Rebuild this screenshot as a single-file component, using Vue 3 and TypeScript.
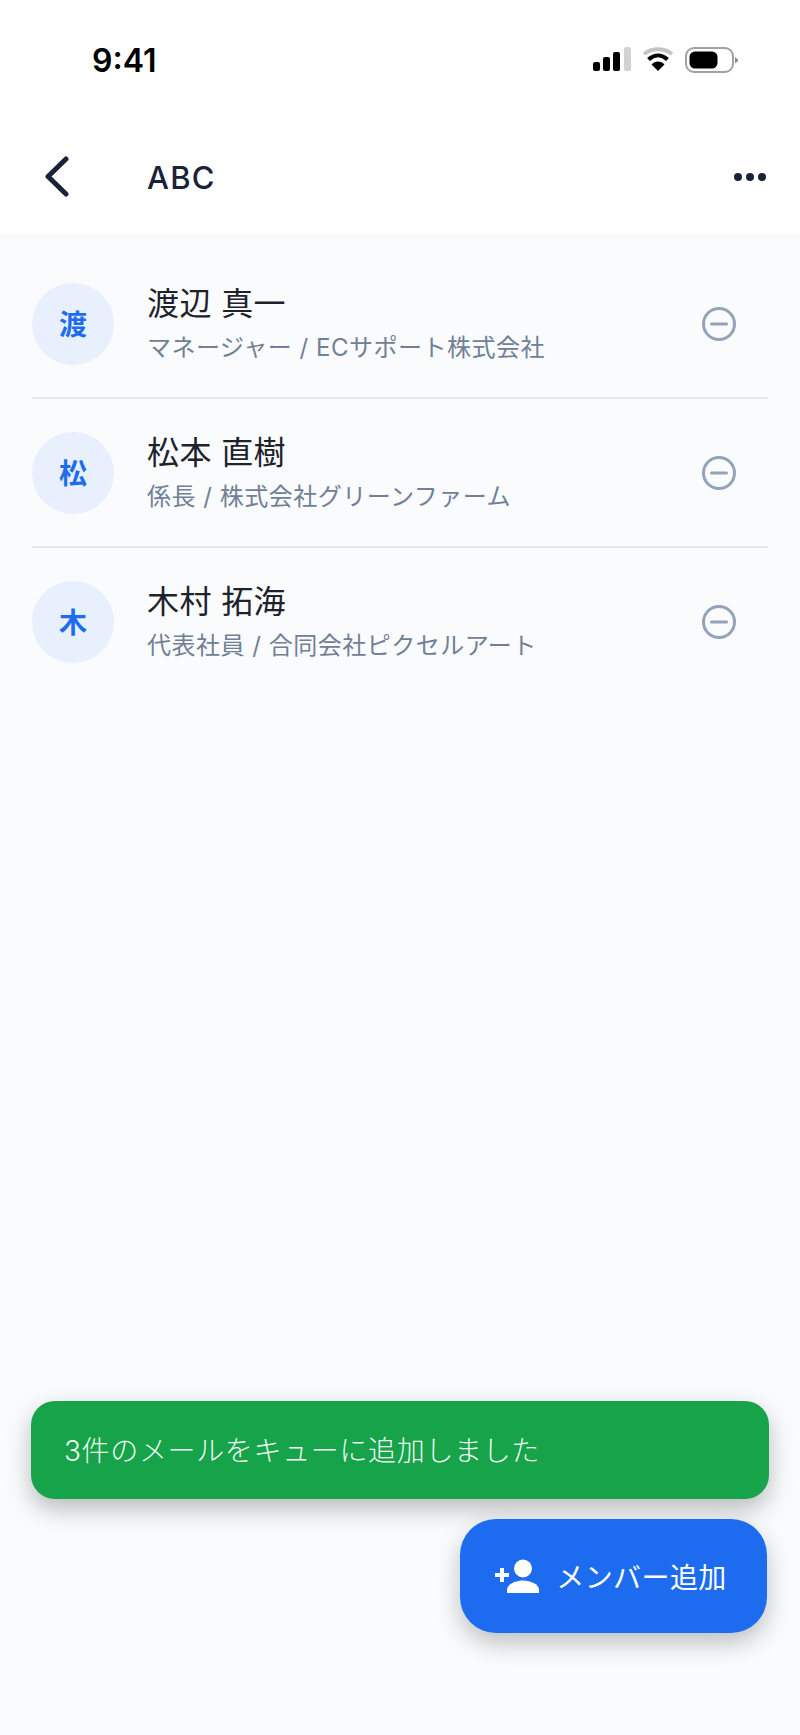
<script setup lang="ts">
interface Member { initial: string; name: string; role: string }
const members: Member[] = [
  { initial: '渡', name: '渡辺 真一', role: 'マネージャー / ECサポート株式会社' },
  { initial: '松', name: '松本 直樹', role: '係長 / 株式会社グリーンファーム' },
  { initial: '木', name: '木村 拓海', role: '代表社員 / 合同会社ピクセルアート' },
]
</script>

<template>
  <div class="page">
    <header class="top">
      <div class="status">
        <span class="time">9:41</span>
        <div class="status-icons">
          <svg width="38" height="26" viewBox="0 0 38 26">
            <rect x="0" y="15" width="7" height="9" rx="2" fill="#000" />
            <rect x="10" y="10" width="7" height="14" rx="2" fill="#000" />
            <rect x="20" y="5" width="7" height="19" rx="2" fill="#000" />
            <rect x="31" y="0" width="7" height="24" rx="2" fill="#d2d2d2" />
          </svg>
          <svg width="32" height="26" viewBox="0 0 32 26">
            <path d="M2 7C10 0.500 22 0.500 30 7" fill="none" stroke="#c4c4c4" stroke-width="4" />
            <path d="M6.500 12.500C12.500 7 19.500 7 25.500 12.500" fill="none" stroke="#000" stroke-width="4" />
            <path d="M16 24L9.500 17.500C13 13.500 19 13.500 22.500 17.500Z" fill="#000" />
          </svg>
          <svg width="54" height="26" viewBox="0 0 54 26">
            <rect x="1" y="1" width="47" height="24" rx="8" fill="none" stroke="#a2a2a2" stroke-width="2" />
            <rect x="4.500" y="4.500" width="28" height="17" rx="5.500" fill="#000" />
            <path d="M50 10L53 12.500V14L50 16.500Z" fill="#8a8a8a" />
          </svg>
        </div>
      </div>
      <div class="nav">
        <svg class="back" width="28" height="42" viewBox="0 0 28 42">
          <path d="M23 4L5 21.500L23 39" fill="none" stroke="#1a2238" stroke-width="5" stroke-linecap="round" stroke-linejoin="round" />
        </svg>
        <h1 class="title">ABC</h1>
        <svg class="more" width="34" height="10" viewBox="0 0 34 10">
          <circle cx="5" cy="5" r="4" fill="#1a2238" />
          <circle cx="17" cy="5" r="4" fill="#1a2238" />
          <circle cx="29" cy="5" r="4" fill="#1a2238" />
        </svg>
      </div>
    </header>

    <main class="list">
      <div v-for="m in members" :key="m.name" class="row">
        <div class="avatar">{{ m.initial }}</div>
        <div class="info">
          <div class="name">{{ m.name }}</div>
          <div class="role">{{ m.role }}</div>
        </div>
        <svg class="remove" width="36" height="36" viewBox="0 0 36 36">
          <circle cx="18" cy="18" r="15.500" fill="none" stroke="#94a3b8" stroke-width="3" />
          <path d="M10.500 18H25.500" fill="none" stroke="#94a3b8" stroke-width="3" stroke-linecap="round" />
        </svg>
      </div>
    </main>

    <footer class="bottom">
      <div class="toast">3件のメールをキューに追加しました</div>
      <button class="fab" type="button">
        <svg width="46" height="34" viewBox="0 0 46 34">
          <path d="M6 14H10V9H6ZM6 14H1V18H6V23H10V18H15V14H10" fill="#fff" />
          <circle cx="29" cy="9.500" r="9" fill="#fff" />
          <path d="M13 34V31C13 25 22 21.500 29 21.500S45 25 45 31V34Z" fill="#fff" />
        </svg>
        <span>メンバー追加</span>
      </button>
    </footer>
  </div>
</template>

<style scoped>
.page {
  width: 800px;
  height: 1735px;
  display: flex;
  flex-direction: column;
  background: #f9fbfd;
  font-family: Inter, "Noto Sans CJK JP", sans-serif;
  overflow: hidden;
}
.top {
  background: #fff;
  height: 234px;
  flex: none;
}
.status {
  height: 118px;
  display: flex;
  align-items: flex-start;
  justify-content: space-between;
  padding: 39px 61px 0 92px;
  box-sizing: border-box;
}
.time {
  font-size: 32px;
  line-height: 44px;
  font-weight: 600;
  color: #000;
}
.status-icons {
  display: flex;
  align-items: center;
  gap: 11px;
  margin-top: 8px;
}
.nav {
  height: 116px;
  display: flex;
  align-items: center;
  padding: 0 33px 0 43px;
}
.back {
  flex: none;
  margin-right: 76px;
}
.title {
  flex: 1;
  margin: 4px 0 0;
  font-size: 31px;
  line-height: 40px;
  font-weight: 500;
  color: #1a2238;
  letter-spacing: 1.2px;
}
.more {
  margin-top: 2px;
}
.list {
  padding: 16px 32px 0;
}
.row {
  height: 149px;
  box-sizing: border-box;
  display: flex;
  align-items: center;
  border-bottom: 2px solid #e3e8ec;
}
.row:last-child {
  border-bottom-color: transparent;
}
.avatar {
  width: 82px;
  height: 82px;
  flex: none;
  margin-right: 33px;
  border-radius: 50%;
  background: #e8f0fe;
  color: #1d6cf0;
  font-size: 28px;
  font-weight: 600;
  display: flex;
  align-items: center;
  justify-content: center;
  padding-bottom: 2px;
  box-sizing: border-box;
}
.info {
  flex: 1;
  min-width: 0;
}
.name {
  font-size: 32px;
  line-height: 40px;
  margin-top: 1px;
  letter-spacing: 0.4px;
  color: #1e222b;
}
.role {
  margin-top: 7px;
  font-size: 24px;
  line-height: 34px;
  letter-spacing: 0.5px;
  color: #718096;
}
.remove {
  flex: none;
  margin-right: 31px;
}
.bottom {
  margin-top: auto;
  padding: 0 31px 102px 31px;
  display: flex;
  flex-direction: column;
  align-items: flex-end;
}
.toast {
  align-self: stretch;
  height: 98px;
  box-sizing: border-box;
  padding: 0 33px 2px;
  display: flex;
  align-items: center;
  border-radius: 24px;
  background: #16a34a;
  color: rgba(255, 255, 255, 0.96);
  font-size: 28px;
  font-weight: 300;
  letter-spacing: 0.65px;
  box-shadow: 0 10px 24px rgba(0, 0, 0, 0.26);
}
.fab {
  margin-top: 20px;
  margin-right: 2px;
  width: 307px;
  height: 114px;
  border: 0;
  border-radius: 36px;
  background: #1d6cf0;
  color: #fff;
  font-family: inherit;
  font-size: 28px;
  letter-spacing: 0.4px;
  display: flex;
  align-items: center;
  justify-content: center;
  gap: 16px;
  padding: 0 6px 0 0;
  box-shadow: 0 10px 24px rgba(0, 0, 0, 0.24);
}
</style>
